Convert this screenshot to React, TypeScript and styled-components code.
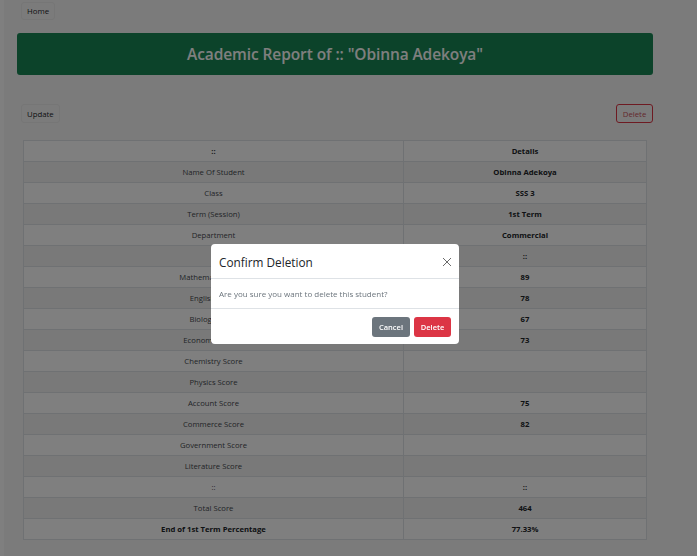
import React from "react";
import styled, { createGlobalStyle } from "styled-components";

const Global = createGlobalStyle`
  html, body { margin: 0; padding: 0; }
  body {
    font-family: "Open Sans", "Liberation Sans", sans-serif;
    background: #f7f7f7;
    color: #212529;
  }
  * { box-sizing: border-box; }
`;

const Page = styled.div`
  display: flex;
  min-height: 556px;
`;

const Strip = styled.div`
  width: 4px;
  background: #ffffff;
  flex: none;
`;

const Main = styled.main`
  flex: 1;
  padding: 2px 44px 16px 13px;
  display: flex;
  flex-direction: column;
`;

const Nav = styled.nav`
  padding-left: 4px;
  display: flex;
`;

const LightButton = styled.button<{ $h?: number }>`
  font-family: inherit;
  font-size: 7.8px;
  color: #212529;
  background: transparent;
  border: 1px solid #ececec;
  border-radius: 3px;
  height: ${(p) => p.$h ?? 18}px;
  padding: 0 5px;
  cursor: pointer;
`;

const Banner = styled.div`
  margin-top: 13px;
  height: 42px;
  background: #198754;
  border-radius: 3px;
  display: flex;
  align-items: center;
  justify-content: center;
`;

const BannerTitle = styled.h3`
  margin: 0;
  color: #ffffff;
  font-size: 15.5px;
  font-weight: 600;
  letter-spacing: -0.1px;
`;

const Actions = styled.div`
  margin-top: 29px;
  padding: 0 0 0 4px;
  display: flex;
  justify-content: space-between;
  align-items: center;
`;

const OutlineDanger = styled.button`
  font-family: inherit;
  font-size: 7.8px;
  color: #c9505c;
  background: transparent;
  border: 1px solid #dc3545;
  border-radius: 3px;
  height: 19px;
  width: 37px;
  padding: 0;
`;

const Table = styled.table`
  margin: 17px 6px 0 6px;
  border-collapse: collapse;
  background: #ffffff;
  font-size: 7.7px;
  table-layout: fixed;
  width: calc(100% - 12px);
`;

const Row = styled.tr<{ $striped?: boolean }>`
  height: 21px;
  background: ${(p) => (p.$striped ? "#f2f2f2" : "#ffffff")};
`;

const Cell = styled.td<{ $bold?: boolean; $label?: boolean }>`
  border: 1px solid #dee2e6;
  text-align: center;
  padding: 1px 4px 0;
  line-height: 1;
  font-weight: ${(p) => (p.$bold ? 700 : 400)};
  color: ${(p) => (p.$label && !p.$bold ? "#45494e" : "#212529")};
  white-space: nowrap;
`;

const Overlay = styled.div`
  position: fixed;
  inset: 0;
  background: rgba(0, 0, 0, 0.5);
`;

const Dialog = styled.div`
  position: absolute;
  left: 211px;
  top: 244px;
  width: 248px;
  background: #ffffff;
  border-radius: 4px;
  display: flex;
  flex-direction: column;
`;

const DialogHeader = styled.div`
  height: 35px;
  padding: 2px 6px 0 8px;
  display: flex;
  align-items: center;
  justify-content: space-between;
  border-bottom: 1px solid #dee2e6;
`;

const DialogTitle = styled.h5`
  margin: 0;
  font-size: 11.8px;
  font-weight: 400;
  color: #212529;
`;

const CloseButton = styled.button`
  background: transparent;
  border: 0;
  padding: 0;
  width: 12px;
  height: 12px;
  display: flex;
  align-items: center;
  justify-content: center;
  color: #6b6b6b;
`;

const DialogBody = styled.div`
  height: 30px;
  padding: 0 8px;
  display: flex;
  align-items: center;
  font-size: 8px;
  color: #6c757d;
  border-bottom: 1px solid #dee2e6;
`;

const DialogFooter = styled.div`
  height: 35px;
  padding: 0 8px;
  display: flex;
  align-items: center;
  justify-content: flex-end;
  gap: 4px;
`;

const SolidButton = styled.button<{ $variant: "secondary" | "danger"; $w: number }>`
  font-family: inherit;
  font-size: 7.5px;
  font-weight: 600;
  color: #ffffff;
  background: ${(p) => (p.$variant === "danger" ? "#dc3545" : "#6c757d")};
  border: 0;
  border-radius: 3px;
  height: 20px;
  width: ${(p) => p.$w}px;
  padding: 0;
`;

type R = { label: string; value: string; bold?: boolean };

const rows: R[] = [
  { label: "Name Of Student", value: "Obinna Adekoya" },
  { label: "Class", value: "SSS 3" },
  { label: "Term (Session)", value: "1st Term" },
  { label: "Department", value: "Commercial" },
  { label: "::", value: "::" },
  { label: "Mathematics Score", value: "89" },
  { label: "English Score", value: "78" },
  { label: "Biology Score", value: "67" },
  { label: "Economics Score", value: "73" },
  { label: "Chemistry Score", value: "" },
  { label: "Physics Score", value: "" },
  { label: "Account Score", value: "75" },
  { label: "Commerce Score", value: "82" },
  { label: "Government Score", value: "" },
  { label: "Literature Score", value: "" },
  { label: "::", value: "::" },
  { label: "Total Score", value: "464" },
  { label: "End of 1st Term Percentage", value: "77.33%", bold: true },
];

export default function App() {
  return (
    <>
      <Global />
      <Page>
        <Strip />
        <Main>
          <Nav>
            <LightButton>Home</LightButton>
          </Nav>
          <Banner>
            <BannerTitle>Academic Report of :: "Obinna Adekoya"</BannerTitle>
          </Banner>
          <Actions>
            <LightButton $h={19}>Update</LightButton>
            <OutlineDanger>Delete</OutlineDanger>
          </Actions>
          <Table>
            <colgroup>
              <col style={{ width: "61%" }} />
              <col />
            </colgroup>
            <tbody>
              <Row>
                <Cell $bold>::</Cell>
                <Cell $bold>Details</Cell>
              </Row>
              {rows.map((r, i) => (
                <Row key={i} $striped={i % 2 === 0}>
                  <Cell $label $bold={r.bold}>{r.label}</Cell>
                  <Cell $bold>{r.value}</Cell>
                </Row>
              ))}
            </tbody>
          </Table>
        </Main>
      </Page>
      <Overlay>
        <Dialog>
          <DialogHeader>
            <DialogTitle>Confirm Deletion</DialogTitle>
            <CloseButton aria-label="Close">
              <svg width="10" height="10" viewBox="0 0 10 10">
                <path d="M1 1 L9 9 M9 1 L1 9" stroke="currentColor" strokeWidth="1" fill="none" />
              </svg>
            </CloseButton>
          </DialogHeader>
          <DialogBody>Are you sure you want to delete this student?</DialogBody>
          <DialogFooter>
            <SolidButton $variant="secondary" $w={38}>Cancel</SolidButton>
            <SolidButton $variant="danger" $w={37}>Delete</SolidButton>
          </DialogFooter>
        </Dialog>
      </Overlay>
    </>
  );
}
